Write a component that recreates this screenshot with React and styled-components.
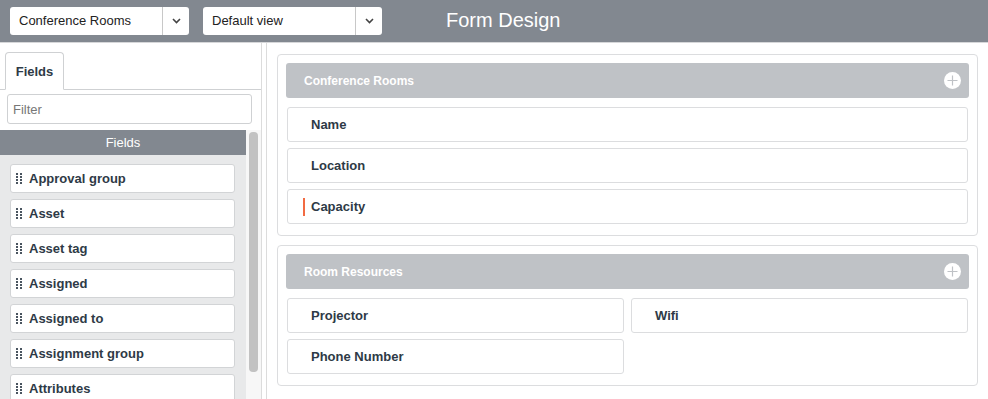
import React from "react";
import styled, { createGlobalStyle } from "styled-components";

const Global = createGlobalStyle`
  html, body { margin: 0; padding: 0; background: #fff; }
  body { font-family: "Liberation Sans", Arial, sans-serif; overflow: hidden; }
  * { box-sizing: border-box; }
`;

const Page = styled.div`
  width: 988px;
  height: 399px;
  display: flex;
  flex-direction: column;
  overflow: hidden;
`;

const TopBar = styled.div`
  height: 43px;
  flex: none;
  background: #828890;
  border-bottom: 1px solid #d6d7d9;
  display: flex;
  align-items: center;
  padding: 0 0 1px 10px;
  gap: 14px;
`;

const Select = styled.div`
  width: 179px;
  height: 28px;
  background: #fff;
  border-radius: 3px;
  display: flex;
  align-items: stretch;
  font-size: 13px;
  color: #222;
`;

const SelectLabel = styled.div`
  flex: 1;
  display: flex;
  align-items: center;
  padding-left: 9px;
`;

const SelectArrow = styled.div`
  width: 27px;
  border-left: 1px solid #c8c8c8;
  display: flex;
  align-items: center;
  justify-content: center;
  color: #444;
`;

const Title = styled.div`
  margin-left: 50px;
  color: #fff;
  font-size: 20px;
  font-family: "Liberation Sans", Arial, sans-serif;
  padding-bottom: 1px;
`;

const Body = styled.div`
  flex: 1;
  display: flex;
  min-height: 0;
`;

const Side = styled.div`
  width: 262px;
  flex: none;
  border-right: 1px solid #dcdcdc;
  display: flex;
  flex-direction: column;
  min-height: 0;
`;

const TabStrip = styled.div`
  height: 47px;
  flex: none;
  padding: 9px 0 0 5px;
  border-bottom: 1px solid #cfd1d3;
  display: flex;
  align-items: flex-end;
`;

const Tab = styled.div`
  width: 59px;
  height: 38px;
  margin-bottom: -1px;
  background: #fff;
  border: 1px solid #cfd1d3;
  border-bottom-color: #fff;
  border-radius: 4px 4px 0 0;
  display: flex;
  align-items: center;
  justify-content: center;
  font-weight: bold;
  font-size: 13px;
  color: #2e3a46;
`;

const Filter = styled.div`
  flex: none;
  margin: 4px 9px 0 7px;
  height: 30px;
  border: 1px solid #cfd1d3;
  border-radius: 3px;
  display: flex;
  align-items: center;
  padding-left: 5px;
  font-size: 13px;
  color: #777;
`;

const ListWrap = styled.div`
  margin-top: 6px;
  flex: 1;
  display: flex;
  min-height: 0;
  overflow: hidden;
`;

const List = styled.div`
  width: 246px;
  flex: none;
  background: #e8e9ea;
  display: flex;
  flex-direction: column;
  overflow: hidden;
`;

const ListHeader = styled.div`
  height: 25px;
  flex: none;
  background: #828890;
  color: #fff;
  font-size: 13px;
  display: flex;
  align-items: center;
  justify-content: center;
`;

const Items = styled.div`
  padding: 9px 11px 0 10px;
  display: flex;
  flex-direction: column;
  gap: 6px;
`;

const Item = styled.div`
  height: 29px;
  flex: none;
  background: #fff;
  border: 1px solid #d2d4d6;
  border-radius: 3px;
  display: flex;
  align-items: center;
  padding-left: 5px;
  gap: 7px;
  font-size: 13px;
  font-weight: bold;
  color: #2e3a46;
`;

const Track = styled.div`
  flex: 1;
  background: #f7f7f7;
  padding: 2px 3px 0 3px;
`;

const Thumb = styled.div`
  height: 240px;
  background: #c2c2c2;
  border-radius: 4px;
`;

const Main = styled.div`
  flex: 1;
  margin-left: 4px;
  border-left: 1px solid #dcdcdc;
  padding: 11px 10px 0 10px;
  display: flex;
  flex-direction: column;
  gap: 9px;
`;

const Card = styled.div`
  border: 1px solid #dcdddf;
  border-radius: 4px;
  padding: 8px 8px 11px 8px;
  display: flex;
  flex-direction: column;
  gap: 9px;
`;

const SectionHeader = styled.div`
  height: 35px;
  background: #bfc2c6;
  border-radius: 3px;
  display: flex;
  align-items: center;
  justify-content: space-between;
  padding: 0 8px 0 18px;
  color: #fff;
  font-weight: bold;
  font-size: 12px;
`;

const FieldGrid = styled.div`
  display: grid;
  grid-template-columns: ${(p) => (p.$cols === 2 ? "1fr 1fr" : "1fr")};
  column-gap: 7px;
  row-gap: 6px;
  padding: 0 1px;
`;

const Field = styled.div`
  height: 35px;
  border: 1px solid #dcdddf;
  border-radius: 3px;
  display: flex;
  align-items: center;
  padding-left: 15px;
  font-size: 13px;
  font-weight: bold;
  color: #2e3a46;
`;

const Marker = styled.span`
  width: 2px;
  height: 18px;
  background: ${(p) => (p.$show ? "#f26b43" : "transparent")};
  margin-right: 6px;
`;

const Chevron = () => (
  <svg width="9" height="6" viewBox="0 0 9 6">
    <path d="M1 1l3.5 3.5L8 1" fill="none" stroke="#444" strokeWidth="1.6" />
  </svg>
);

const Grip = () => (
  <svg width="6" height="12" viewBox="0 0 6 12">
    {[0, 1, 2, 3].map((r) =>
      [0, 1].map((c) => (
        <rect key={`${r}-${c}`} x={c * 4} y={r * 3} width="2" height="2" fill="#4a5560" />
      ))
    )}
  </svg>
);

const PlusCircle = () => (
  <svg width="17" height="17" viewBox="0 0 17 17">
    <circle cx="8.5" cy="8.5" r="8.5" fill="#fff" />
    <path d="M8.5 3.5v10M3.5 8.5h10" stroke="#bfc2c6" strokeWidth="1.2" />
  </svg>
);

const fields = [
  "Approval group",
  "Asset",
  "Asset tag",
  "Assigned",
  "Assigned to",
  "Assignment group",
  "Attributes",
];

export default function App() {
  return (
    <Page>
      <Global />
      <TopBar>
        <Select>
          <SelectLabel>Conference Rooms</SelectLabel>
          <SelectArrow>
            <Chevron />
          </SelectArrow>
        </Select>
        <Select>
          <SelectLabel>Default view</SelectLabel>
          <SelectArrow>
            <Chevron />
          </SelectArrow>
        </Select>
        <Title>Form Design</Title>
      </TopBar>
      <Body>
        <Side>
          <TabStrip>
            <Tab>Fields</Tab>
          </TabStrip>
          <Filter>Filter</Filter>
          <ListWrap>
            <List>
              <ListHeader>Fields</ListHeader>
              <Items>
                {fields.map((f) => (
                  <Item key={f}>
                    <Grip />
                    {f}
                  </Item>
                ))}
              </Items>
            </List>
            <Track>
              <Thumb />
            </Track>
          </ListWrap>
        </Side>
        <Main>
          <Card>
            <SectionHeader>
              Conference Rooms
              <PlusCircle />
            </SectionHeader>
            <FieldGrid $cols={1}>
              <Field><Marker />Name</Field>
              <Field><Marker />Location</Field>
              <Field><Marker $show />Capacity</Field>
            </FieldGrid>
          </Card>
          <Card>
            <SectionHeader>
              Room Resources
              <PlusCircle />
            </SectionHeader>
            <FieldGrid $cols={2}>
              <Field><Marker />Projector</Field>
              <Field><Marker />Wifi</Field>
              <Field><Marker />Phone Number</Field>
            </FieldGrid>
          </Card>
        </Main>
      </Body>
    </Page>
  );
}
